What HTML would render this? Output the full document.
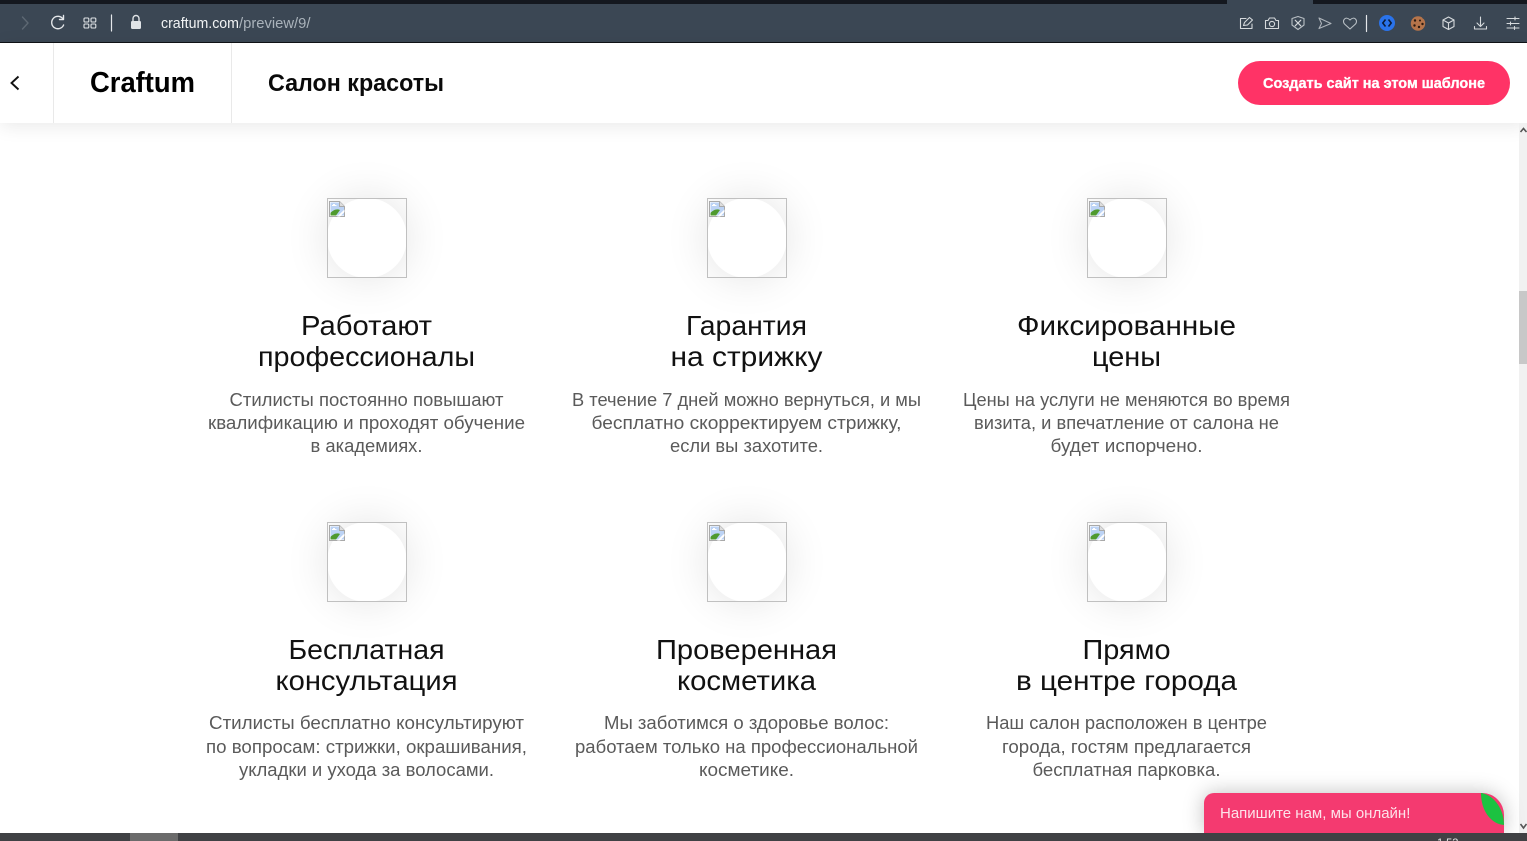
<!DOCTYPE html>
<html lang="ru"><head><meta charset="utf-8"><title>Craftum</title>
<style>
html,body{margin:0;padding:0;width:1527px;height:841px;overflow:hidden;background:#fff}
body{position:relative;font-family:"Liberation Sans",sans-serif}
.a{position:absolute}
.topstrip{left:0;top:0;width:1527px;height:4px;background:#14181f}
.tab{left:1227px;top:0;width:86px;height:4px;background:#3b4754}
.toolbar{left:0;top:4px;width:1527px;height:38px;background:#3b4754}
.blk{left:0;top:42px;width:1527px;height:1px;background:#0f1216}
.header{left:0;top:43px;width:1527px;height:80px;background:#fff;box-shadow:0 3px 18px rgba(0,0,0,.09);z-index:3}
.sep{top:43px;width:1px;height:80px;background:#e9e9e9;z-index:4}
.btn{left:1238px;top:61px;width:272px;height:44px;border-radius:22px;background:#ff3366;z-index:4}
.sb{left:1519px;top:123px;width:8px;height:710px;background:#f1f1f1;z-index:4}
.thumb{left:1519px;top:291px;width:8px;height:73px;background:#c8c8c8;z-index:4}
.bottom{left:0;top:833px;width:1527px;height:8px;background:#404144;z-index:6}
.bthumb{left:130px;top:833px;width:48px;height:8px;background:#6b6b6b;z-index:7}
.circle{width:80px;height:80px;border-radius:50%;background:#fff;box-shadow:0 0 45px rgba(0,0,0,.12)}
.box{width:78px;height:78px;border:1px solid #c0c0c0}
.chat{left:1204px;top:793px;width:300px;height:40px;background:#f43a70;border-radius:10px 22px 0 0;overflow:hidden;box-shadow:0 0 20px rgba(0,0,0,.25);z-index:5}
.green{left:277px;top:0;width:23px;height:32px}
svg.o{position:absolute;left:0;top:0;z-index:8;pointer-events:none}
</style></head><body>
<div class="a topstrip"></div><div class="a tab"></div><div class="a toolbar"></div><div class="a blk"></div>
<div class="a header"></div><div class="a sep" style="left:53px"></div><div class="a sep" style="left:231px"></div>
<div class="a btn"></div>
<div class="a sb"></div><div class="a thumb"></div>

<div class="a circle" style="left:327px;top:198px"></div><div class="a circle" style="left:707px;top:198px"></div><div class="a circle" style="left:1087px;top:198px"></div>
<div class="a circle" style="left:327px;top:522px"></div><div class="a circle" style="left:707px;top:522px"></div><div class="a circle" style="left:1087px;top:522px"></div>
<div class="a box" style="left:327px;top:198px"></div><div class="a box" style="left:707px;top:198px"></div><div class="a box" style="left:1087px;top:198px"></div>
<div class="a box" style="left:327px;top:522px"></div><div class="a box" style="left:707px;top:522px"></div><div class="a box" style="left:1087px;top:522px"></div>

<div class="a chat">
<svg class="a green" viewBox="0 0 23 32"><path d="M0 0H1C14 3 23 17 23 32C10 31 0 18 0 0Z" fill="#1cc241"/></svg>
<div class="a" style="left:16px;top:12px;font-size:15px;line-height:18px;color:#fde3ea;white-space:nowrap">Напишите нам, мы онлайн!</div>
</div>
<div class="a bottom"></div><div class="a bthumb"></div>

<svg class="o" width="1527" height="841" viewBox="0 0 1527 841" xmlns="http://www.w3.org/2000/svg">
<defs>
<symbol id="bi" viewBox="0 0 16 16">
<path d="M.5.5H10.5L15.5 5.5V15.5H.5Z" fill="#fff" stroke="#a9a9a9"/>
<path d="M10.5.5V5.5H15.5" fill="#ddd" stroke="#a9a9a9"/>
<rect x="1.5" y="1.5" width="8.5" height="13" fill="#bcd3f5"/><rect x="10" y="6" width="5" height="8.5" fill="#bcd3f5"/>
<path d="M1.5 14.5V12C4 9 8 7.5 11 9L7 14.5Z" fill="#4f9a2f"/>
<path d="M3 5H7.5V4H6V3H4V4H3Z" fill="#fff"/>
<path d="M8 15.5L15.5 8.5V11L11 15.5Z" fill="#fff"/>
</symbol>
</defs>
<use href="#bi" x="329" y="201" width="16" height="16"/><use href="#bi" x="709" y="201" width="16" height="16"/><use href="#bi" x="1089" y="201" width="16" height="16"/>
<use href="#bi" x="329" y="525" width="16" height="16"/><use href="#bi" x="709" y="525" width="16" height="16"/><use href="#bi" x="1089" y="525" width="16" height="16"/>

<!-- toolbar left -->
<g fill="none" stroke-linecap="round" stroke-linejoin="round">
<path d="M22.5 17L28 23L22.5 29" stroke="#5d6873" stroke-width="1.4"/>
<path d="M63 19A6.2 6.2 0 1 0 63.6 25" stroke="#e4e7ea" stroke-width="1.4"/>
<path d="M59.5 19.5H63.5V15.5" stroke="#e4e7ea" stroke-width="1.4"/>
<rect x="84" y="18" width="4.8" height="4" rx="1" stroke="#dfe3e6" stroke-width="1.1"/><rect x="91" y="18" width="4.8" height="4" rx="1" stroke="#dfe3e6" stroke-width="1.1"/>
<rect x="84" y="24" width="4.8" height="4" rx="1" stroke="#dfe3e6" stroke-width="1.1"/><rect x="91" y="24" width="4.8" height="4" rx="1" stroke="#dfe3e6" stroke-width="1.1"/>
<path d="M111.5 15V31" stroke="#e4e7ea" stroke-width="1.2"/>
<path d="M133 21V18.5A3 3 0 0 1 139 18.5V21" stroke="#dfe3e6" stroke-width="1.4"/>
</g>
<rect x="131" y="21" width="10" height="8" rx="1.2" fill="#dfe3e6"/>
<text x="161" y="28" font-size="14.5" fill="#f2f4f5" textLength="78" lengthAdjust="spacingAndGlyphs">craftum.com</text>
<text x="239" y="28" font-size="14.5" fill="#aab3bb" textLength="71.5" lengthAdjust="spacingAndGlyphs">/preview/9/</text>

<!-- toolbar right -->
<g fill="none" stroke="#d5d9dc" stroke-width="1.1" stroke-linecap="round" stroke-linejoin="round">
<path d="M1246 18.5H1240.5V28.5H1252V24"/><path d="M1243.5 25.5L1244.5 22.5L1249.5 17.5L1252.5 20L1247.5 25L1243.5 25.5Z"/>
<path d="M1265.5 20.5H1268L1269.5 18H1274.5L1276 20.5H1278.5V28.5H1265.5Z"/><circle cx="1272" cy="24" r="2.6"/>
<path d="M1298 16.5L1304 18.5V25L1298 29.5L1292 25V18.5Z" stroke="#b9c0c5"/><path d="M1295.2 20.2L1300.8 25.8M1300.8 20.2L1295.2 25.8"/>
<path d="M1319 18L1331 23.5L1319 28.5L1321.5 23.5Z" stroke="#aeb5bb"/>
<path d="M1350 29L1344.5 24C1341.5 20.5 1345.8 15.5 1350 20C1354.2 15.5 1358.5 20.5 1355.5 24Z" stroke="#b9c0c5"/>
<path d="M1366.5 15.5V31.5" stroke="#e4e7ea" stroke-width="1.2"/>
<path d="M1448.5 17L1454 20V26.5L1448.5 29.5L1443 26.5V20ZM1443 20L1448.5 23L1454 20M1448.5 23V29.5"/>
<path d="M1480.5 17V26M1477 23L1480.5 26.5L1484 23M1474.5 26.5V29H1486.5V26.5" />
<path d="M1507 18.5H1519M1507 23.5H1519M1507 28H1519"/>
<path d="M1515 17V20M1510.5 22V25M1514.5 26.5V29.5"/>
</g>
<circle cx="1387" cy="23" r="8" fill="#2a73ea"/>
<path d="M1385.5 19.5L1382.8 23L1385.5 26.5M1388.5 19.5L1391.2 23L1388.5 26.5" fill="none" stroke="#0c1d3a" stroke-width="1.6"/>
<circle cx="1418" cy="23.5" r="7.2" fill="#b5744a"/>
<circle cx="1424.5" cy="16.5" r="2.6" fill="#3b4754"/>
<g fill="#2c1a10"><circle cx="1415" cy="20.5" r="1.2"/><circle cx="1420" cy="20.5" r="1"/><circle cx="1414.5" cy="25.5" r="1.2"/><circle cx="1419" cy="27" r="1.2"/><circle cx="1422.5" cy="24" r="1.2"/></g>

<!-- header -->
<path d="M18.5 76.5L11.5 83L18.5 89.5" fill="none" stroke="#111" stroke-width="1.9"/>
<text x="90" y="92" font-size="29" font-weight="bold" fill="#000" textLength="105" lengthAdjust="spacingAndGlyphs">Craftum</text>
<text x="268" y="91" font-size="24" font-weight="bold" fill="#0a0a0a" textLength="176" lengthAdjust="spacingAndGlyphs">Салон красоты</text>
<text x="1263" y="88" font-size="15" font-weight="bold" fill="#fff" stroke="#fff" stroke-width=".35" textLength="222" lengthAdjust="spacingAndGlyphs">Создать сайт на этом шаблоне</text>

<!-- scrollbar arrows -->
<path d="M1520.5 132L1523.5 128.5L1526.5 132" fill="none" stroke="#555" stroke-width="1.6"/>
<path d="M1520.5 824L1523.5 828L1526.5 824" fill="none" stroke="#555" stroke-width="1.6"/>

<!-- headings -->
<g font-size="28" fill="#111" text-anchor="middle">
<text x="366.5" y="335" textLength="131" lengthAdjust="spacingAndGlyphs">Работают</text>
<text x="366.5" y="366" textLength="217" lengthAdjust="spacingAndGlyphs">профессионалы</text>
<text x="746.5" y="335" textLength="121" lengthAdjust="spacingAndGlyphs">Гарантия</text>
<text x="746.5" y="366" textLength="152" lengthAdjust="spacingAndGlyphs">на стрижку</text>
<text x="1126.5" y="335" textLength="219" lengthAdjust="spacingAndGlyphs">Фиксированные</text>
<text x="1126.5" y="366" textLength="69" lengthAdjust="spacingAndGlyphs">цены</text>
<text x="366.5" y="659" textLength="156" lengthAdjust="spacingAndGlyphs">Бесплатная</text>
<text x="366.5" y="690" textLength="182" lengthAdjust="spacingAndGlyphs">консультация</text>
<text x="746.5" y="659" textLength="181" lengthAdjust="spacingAndGlyphs">Проверенная</text>
<text x="746.5" y="690" textLength="139" lengthAdjust="spacingAndGlyphs">косметика</text>
<text x="1126.5" y="659" textLength="88" lengthAdjust="spacingAndGlyphs">Прямо</text>
<text x="1126.5" y="690" textLength="221" lengthAdjust="spacingAndGlyphs">в центре города</text>
</g>

<!-- body text -->
<g font-size="18" fill="#5a5a5a" text-anchor="middle">
<text x="366.5" y="406" textLength="274" lengthAdjust="spacingAndGlyphs">Стилисты постоянно повышают</text>
<text x="366.5" y="429" textLength="317" lengthAdjust="spacingAndGlyphs">квалификацию и проходят обучение</text>
<text x="366.5" y="452" textLength="112" lengthAdjust="spacingAndGlyphs">в академиях.</text>
<text x="746.5" y="406" textLength="349" lengthAdjust="spacingAndGlyphs">В течение 7 дней можно вернуться, и мы</text>
<text x="746.5" y="429" textLength="310" lengthAdjust="spacingAndGlyphs">бесплатно скорректируем стрижку,</text>
<text x="746.5" y="452" textLength="153" lengthAdjust="spacingAndGlyphs">если вы захотите.</text>
<text x="1126.5" y="406" textLength="327" lengthAdjust="spacingAndGlyphs">Цены на услуги не меняются во время</text>
<text x="1126.5" y="429" textLength="305" lengthAdjust="spacingAndGlyphs">визита, и впечатление от салона не</text>
<text x="1126.5" y="452" textLength="152" lengthAdjust="spacingAndGlyphs">будет испорчено.</text>
<text x="366.5" y="729" textLength="315" lengthAdjust="spacingAndGlyphs">Стилисты бесплатно консультируют</text>
<text x="366.5" y="753" textLength="321" lengthAdjust="spacingAndGlyphs">по вопросам: стрижки, окрашивания,</text>
<text x="366.5" y="776" textLength="255" lengthAdjust="spacingAndGlyphs">укладки и ухода за волосами.</text>
<text x="746.5" y="729" textLength="285" lengthAdjust="spacingAndGlyphs">Мы заботимся о здоровье волос:</text>
<text x="746.5" y="753" textLength="343" lengthAdjust="spacingAndGlyphs">работаем только на профессиональной</text>
<text x="746.5" y="776" textLength="95" lengthAdjust="spacingAndGlyphs">косметике.</text>
<text x="1126.5" y="729" textLength="281" lengthAdjust="spacingAndGlyphs">Наш салон расположен в центре</text>
<text x="1126.5" y="753" textLength="249" lengthAdjust="spacingAndGlyphs">города, гостям предлагается</text>
<text x="1126.5" y="776" textLength="188" lengthAdjust="spacingAndGlyphs">бесплатная парковка.</text>
</g>
<text x="1437" y="846" font-size="11" fill="#e8e8e8">1.52</text>
</svg>
</body></html>
